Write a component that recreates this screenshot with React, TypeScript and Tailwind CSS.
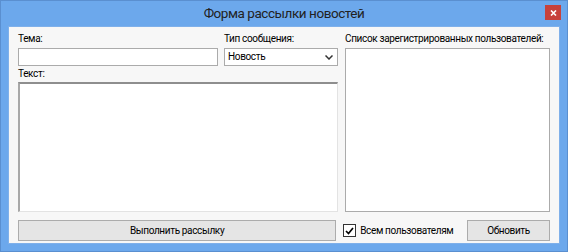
import React from "react";

export default function App() {
  const font = { fontFamily: 'Roboto, "Liberation Sans", Arial, sans-serif' };
  return (
    <div
      className="w-[568px] h-[252px] bg-[#6ca8ec] border border-[#5a8fd0] flex flex-col overflow-hidden text-[10px] tracking-[-0.35px] text-black"
      style={font}
    >
      {/* Title bar */}
      <div className="relative h-[25px] flex items-center justify-center shrink-0">
        <span className="text-[13.5px] tracking-[-0.45px] text-[#222] leading-none">Форма рассылки новостей</span>
        <div className="absolute right-[6px] top-[4px] w-[16px] h-[15px] bg-[#c7413b] flex items-center justify-center">
          <svg width="7" height="6" viewBox="0 0 7 6">
            <path d="M1 0.5 L6 5.5 M6 0.5 L1 5.5" stroke="#fff" strokeWidth="1.6" />
          </svg>
        </div>
      </div>
      {/* Client area */}
      <div className="mx-[7px] h-[218px] bg-[#f7f7f7] border border-[#7fb0ea] flex flex-col px-[9px] pt-[5px] shrink-0">
        <div className="flex gap-[7px] h-[180px]">
          {/* left column */}
          <div className="w-[320px] flex flex-col">
            <div className="flex gap-[6px]">
              <div className="w-[200px] flex flex-col">
                <div className="h-[16px] leading-[14px]">Тема:</div>
                <div className="h-[18px] bg-white border border-[#ababab]" />
              </div>
              <div className="w-[114px] flex flex-col">
                <div className="h-[16px] leading-[14px]">Тип сообщения:</div>
                <div className="h-[18px] bg-white border border-[#ababab] flex items-center justify-between pl-[3px] pr-[4px]">
                  <span className="leading-none">Новость</span>
                  <svg width="8" height="5" viewBox="0 0 8 5">
                    <path d="M0.5 0.5 L4 4 L7.5 0.5" stroke="#333" strokeWidth="1.5" fill="none" />
                  </svg>
                </div>
              </div>
            </div>
            <div className="h-[15px] leading-[14px] mt-[1px]">Текст:</div>
            <div className="flex-1 bg-white border-t-2 border-l-2 border-t-[#8e8e8e] border-l-[#a8a8a8] border-b border-r border-b-[#e3e3e3] border-r-[#e3e3e3]" />
          </div>
          {/* right column */}
          <div className="w-[208px] flex flex-col">
            <div className="h-[16px] leading-[14px] whitespace-nowrap">Список зарегистрированных пользователей:</div>
            <div className="flex-1 bg-white border border-[#ababab]" />
          </div>
        </div>
        <div className="flex gap-[7px] mt-[8px] h-[21px]">
          <button className="w-[320px] h-[21px] bg-[#e5e5e5] border border-[#acacac] leading-none" style={font}>
            Выполнить рассылку
          </button>
          <div className="w-[208px] flex items-center justify-between">
            <div className="flex items-center gap-[4px]">
              <div className="w-[13px] h-[13px] bg-white border border-[#333] flex items-center justify-center">
                <svg width="9" height="8" viewBox="0 0 9 8">
                  <path d="M1 4 L3.5 6.5 L8 1" stroke="#000" strokeWidth="1.7" fill="none" />
                </svg>
              </div>
              <span>Всем пользователям</span>
            </div>
            <button className="w-[83px] h-[21px] bg-[#e5e5e5] border border-[#acacac] leading-none" style={font}>
              Обновить
            </button>
          </div>
        </div>
      </div>
    </div>
  );
}
